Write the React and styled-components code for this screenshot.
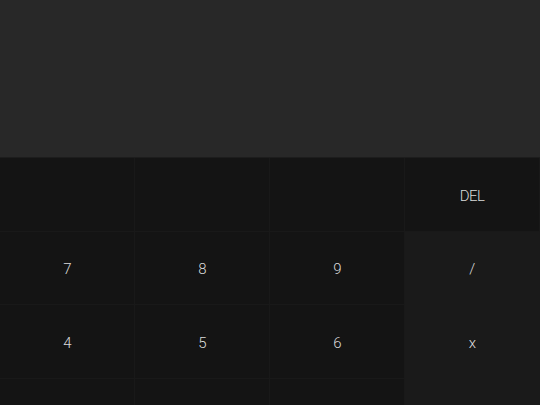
import React from "react";
import styled, { createGlobalStyle } from "styled-components";

const Global = createGlobalStyle`
  html, body { margin: 0; padding: 0; background: #141414; overflow: hidden; }
  * { box-sizing: border-box; }
`;

const Shell = styled.div`
  width: 540px;
  height: 405px;
  overflow: hidden;
  display: flex;
  flex-direction: column;
  background: #141414;
  font-family: Roboto, "Noto Sans", sans-serif;
`;

const Display = styled.div`
  height: 158px;
  flex-shrink: 0;
  background: #282828;
  border-bottom: 1px solid #1d1d1d;
`;

const Pad = styled.div`
  display: grid;
  grid-template-columns: repeat(4, 1fr);
  grid-auto-rows: 73.5px;
`;

const Key = styled.button`
  border: none;
  border-right: 1px solid #191919;
  border-bottom: 1px solid #191919;
  background: ${(p) => (p.$op ? "#1a1a1a" : "#141414")};
  color: #dadada;
  font-family: inherit;
  font-weight: 300;
  font-size: 15px;
  letter-spacing: -0.6px;
  display: flex;
  align-items: center;
  justify-content: center;
  padding: 3px 0 0;
  ${(p) => p.$op && "border-color: #1a1a1a;"}
`;

const keys = [
  { l: "" }, { l: "" }, { l: "" }, { l: "DEL" },
  { l: "7" }, { l: "8" }, { l: "9" }, { l: "/", op: true },
  { l: "4" }, { l: "5" }, { l: "6" }, { l: "x", op: true },
  { l: "1" }, { l: "2" }, { l: "3" }, { l: "-", op: true },
];

export default function App() {
  return (
    <Shell>
      <Global />
      <Display />
      <Pad>
        {keys.map((k, i) => (
          <Key key={i} $op={k.op}>{k.l}</Key>
        ))}
      </Pad>
    </Shell>
  );
}
